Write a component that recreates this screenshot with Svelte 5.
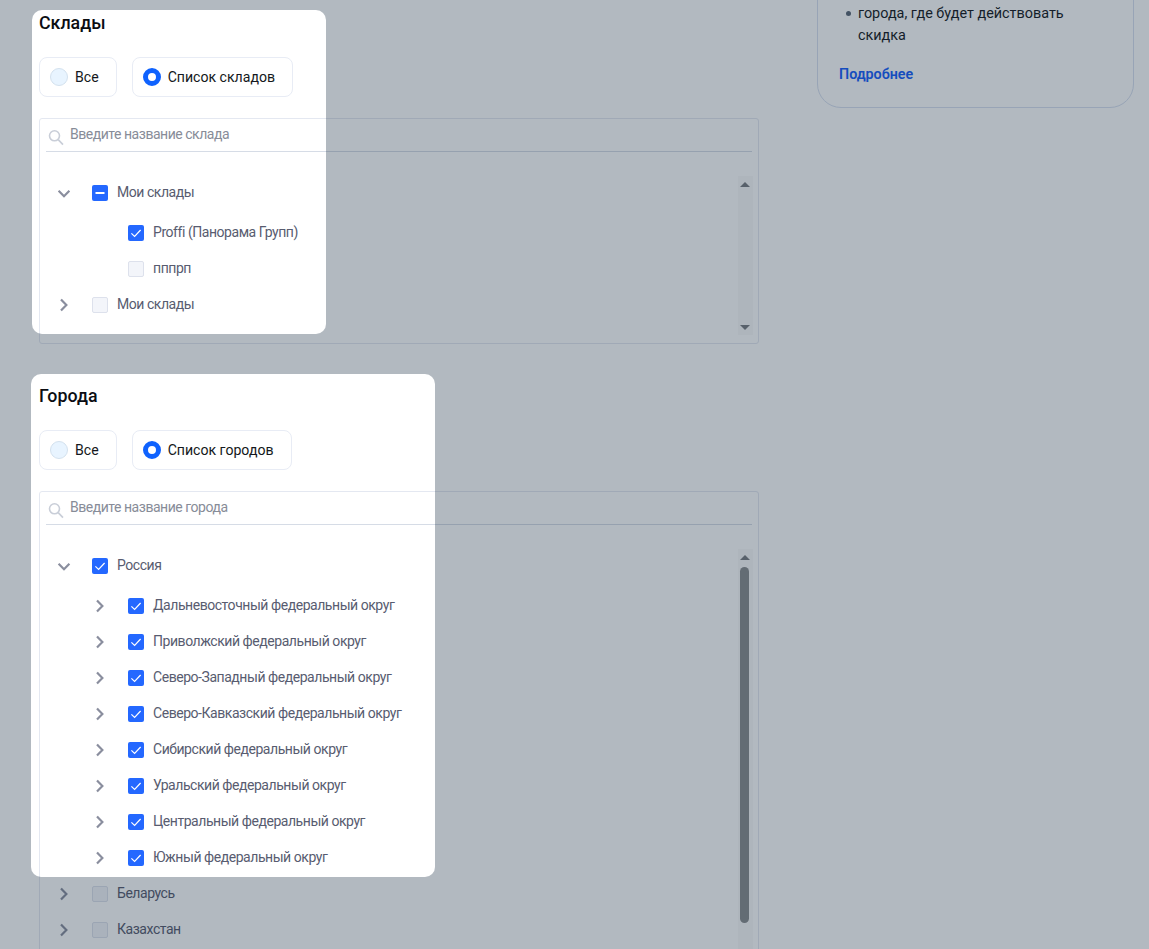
<script>
  const stockRows = [
    { level: 0, chevron: 'down', state: 'mixed', label: 'Мои склады' },
    { level: 1, chevron: '', state: 'checked', label: 'Proffi (Панорама Групп)' },
    { level: 1, chevron: '', state: 'empty', label: 'пппрп' },
    { level: 0, chevron: 'right', state: 'empty', label: 'Мои склады' }
  ];
  const districts = [
    'Дальневосточный федеральный округ',
    'Приволжский федеральный округ',
    'Северо-Западный федеральный округ',
    'Северо-Кавказский федеральный округ',
    'Сибирский федеральный округ',
    'Уральский федеральный округ',
    'Центральный федеральный округ',
    'Южный федеральный округ'
  ];
  const cityRows = [
    { level: 0, chevron: 'down', state: 'checked', label: 'Россия' },
    ...districts.map((label) => ({ level: 1, chevron: 'right', state: 'checked', label })),
    { level: 0, chevron: 'right', state: 'empty', label: 'Беларусь' },
    { level: 0, chevron: 'right', state: 'empty', label: 'Казахстан' }
  ];
  const sections = [
    { title: 'Склады', list: 'Список складов', search: 'Введите название склада', rows: stockRows, thumb: false },
    { title: 'Города', list: 'Список городов', search: 'Введите название города', rows: cityRows, thumb: true }
  ];
</script>

<div class="page">
  <main class="column">
    {#each sections as s}
      <section class="section">
        <h2>{s.title}</h2>
        <div class="radios">
          <label class="radio"><span class="dot"></span>Все</label>
          <label class="radio"><span class="dot on"></span>{s.list}</label>
        </div>
        <div class="panel" class:tall={s.thumb}>
          <div class="search">
            <svg class="glass" width="16" height="17" viewBox="0 0 16 17" fill="none" stroke="#c9ced8" stroke-width="1.6">
              <circle cx="6.5" cy="6.8" r="5" />
              <path d="M10.2 10.6 15 15.6" />
            </svg>
            <span class="placeholder">{s.search}</span>
          </div>
          <div class="tree">
            {#each s.rows as r, i}
              <div class="row" class:nested={r.level === 1} class:gap={i === 1}>
                <span class="chev {r.chevron}">
                  {#if r.chevron === 'down'}
                    <svg width="14" height="10" viewBox="0 0 14 10" fill="none" stroke="#8a8e9e" stroke-width="2.2"><path d="M1.6 1.8 7 7.2l5.4-5.4" /></svg>
                  {:else if r.chevron === 'right'}
                    <svg width="10" height="14" viewBox="0 0 10 14" fill="none" stroke="#8a8e9e" stroke-width="2.2"><path d="M2 1.4 7.4 7 2 12.6" /></svg>
                  {/if}
                </span>
                <span class="box {r.state}">
                  {#if r.state === 'checked'}
                    <svg width="16" height="16" viewBox="0 0 16 16" fill="none" stroke="#fff" stroke-width="1.2"><path d="M3.4 8.4 6.6 11.4 12.6 5" /></svg>
                  {:else if r.state === 'mixed'}
                    <svg width="16" height="16" viewBox="0 0 16 16" fill="none" stroke="#fff" stroke-width="2"><path d="M3.5 8h9" /></svg>
                  {/if}
                </span>
                <span class="text">{r.label}</span>
              </div>
            {/each}
          </div>
          <div class="scrollbar">
            <span class="arrow up"></span>
            {#if s.thumb}<span class="thumb"></span>{/if}
            <span class="arrow down"></span>
          </div>
        </div>
      </section>
    {/each}
  </main>

  <aside class="card">
    <ul>
      <li>города, где будет действовать скидка</li>
    </ul>
    <a href="#more">Подробнее</a>
  </aside>

  <svg class="shade" width="1149" height="949">
    <defs>
      <mask id="holes">
        <rect width="1149" height="949" fill="#fff" />
        <rect x="32" y="10" width="294" height="324" rx="10" fill="#000" />
        <rect x="31" y="374" width="404" height="503" rx="10" fill="#000" />
      </mask>
    </defs>
    <rect width="1149" height="949" fill="rgb(22,43,64)" fill-opacity="0.33" mask="url(#holes)" />
  </svg>
</div>

<style>
  :global(body) {
    margin: 0;
    background: #fff;
  }
  .page {
    position: relative;
    display: flex;
    align-items: flex-start;
    width: 1149px;
    height: 949px;
    overflow: hidden;
    box-sizing: border-box;
    padding-left: 39px;
    font-family: Roboto, "Liberation Sans", sans-serif;
    color: #10151c;
  }
  .column {
    width: 720px;
    padding-top: 11px;
    flex: none;
  }
  .section {
    margin-bottom: 40px;
  }
  h2 {
    margin: 0 0 22px;
    font-size: 17.8px;
    line-height: 24px;
    font-weight: 500;
    color: #0b0d12;
  }
  .radios {
    display: flex;
    gap: 15px;
    margin-bottom: 21px;
  }
  .radio {
    display: flex;
    align-items: center;
    gap: 7px;
    height: 40px;
    box-sizing: border-box;
    padding: 0 17px 0 10px;
    border: 1px solid #e8ecf5;
    border-radius: 8px;
    font-size: 14.1px;
    color: #141820;
  }
  .dot {
    width: 18px;
    height: 18px;
    box-sizing: border-box;
    border-radius: 50%;
    background: #e8f4ff;
    border: 1px solid #d3e1ee;
  }
  .dot.on {
    background: #fff;
    border: 5px solid #0f62fe;
  }
  .panel {
    position: relative;
    height: 226px;
    box-sizing: border-box;
    padding: 0 6px;
    border: 1px solid #e4e8f1;
    border-radius: 3px;
    overflow: hidden;
  }
  .panel.tall {
    height: 500px;
  }
  .search {
    display: flex;
    align-items: center;
    height: 32px;
    border-bottom: 1px solid #d6dce6;
    padding-left: 2px;
  }
  .glass {
    margin-top: 4px;
  }
  .placeholder {
    margin-left: 6px;
    font-size: 14px;
    letter-spacing: -0.47px;
    color: #878c98;
    margin-top: -3px;
  }
  .tree {
    padding-top: 22px;
  }
  .row {
    display: flex;
    align-items: center;
    height: 36px;
    padding-left: 7px;
  }
  .row.nested {
    padding-left: 43px;
  }
  .row.gap {
    margin-top: 4px;
  }
  .chev {
    width: 22px;
    height: 16px;
    display: flex;
    align-items: center;
    justify-content: center;
    margin-right: 17px;
    margin-top: 2px;
  }
  .chev.down {
    margin-top: 4px;
  }
  .box {
    width: 16px;
    height: 16px;
    box-sizing: border-box;
    border-radius: 2px;
    display: block;
    flex: none;
    margin-top: 1px;
  }
  .box svg {
    display: block;
  }
  .box.empty {
    background: #f3f5fa;
    border: 1px solid #dde1ec;
  }
  .box.checked,
  .box.mixed {
    background: #2468ff;
  }
  .text {
    margin-left: 9px;
    font-size: 14px;
    letter-spacing: -0.45px;
    color: #585c70;
    margin-top: -1px;
  }
  .scrollbar {
    position: absolute;
    top: 57px;
    right: 5px;
    width: 15px;
    bottom: 8px;
    background: #fafafa;
  }
  .panel.tall .scrollbar {
    bottom: -100px;
  }
  .arrow {
    position: absolute;
    left: 2px;
    width: 0;
    height: 0;
    border-left: 5px solid transparent;
    border-right: 5px solid transparent;
  }
  .arrow.up {
    top: 6px;
    border-bottom: 5px solid #7a7d80;
  }
  .arrow.down {
    bottom: 5px;
    border-top: 5px solid #7a7d80;
  }
  .thumb {
    position: absolute;
    left: 2px;
    top: 18px;
    width: 9px;
    height: 356px;
    border-radius: 5px;
    background: #8a8c8e;
  }
  .card {
    box-sizing: border-box;
    flex: none;
    width: 317px;
    height: 139px;
    margin: -31px 0 0 58px;
    padding: 33px 21px 0;
    border: 1px solid #d8e0f0;
    border-radius: 24px;
    font-size: 14.4px;
    line-height: 22px;
  }
  ul {
    list-style: none;
    margin: 0 0 16px;
    padding: 0 40px 0 19px;
    color: #141820;
  }
  li {
    position: relative;
  }
  li::before {
    content: "";
    position: absolute;
    left: -12px;
    top: 8px;
    width: 5px;
    height: 5px;
    border-radius: 50%;
    background: #5a6675;
  }
  a {
    display: block;
    color: #155efc;
    font-weight: 600;
    font-size: 14.3px;
    text-decoration: none;
  }
  .shade {
    position: absolute;
    top: 0;
    left: 0;
    pointer-events: none;
  }
</style>
